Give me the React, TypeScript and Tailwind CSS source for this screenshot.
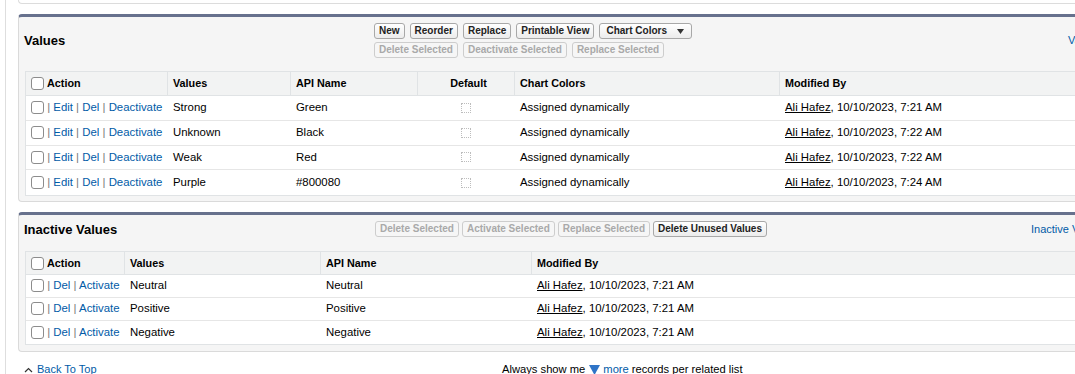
import React from "react";

const LINK = "text-[#015ba7]";

function Box() {
  return <span className="inline-block w-[13px] h-[13px] border border-[#8c8c8c] rounded-[3px] bg-white align-middle shrink-0" />;
}

function Btn({ children, disabled }: { children: React.ReactNode; disabled?: boolean }) {
  return (
    <span
      className={`inline-flex items-center h-[16px] px-[4px] border rounded-[3px] text-[10px] font-bold leading-none whitespace-nowrap ${
        disabled
          ? "border-[#cdcdcd] text-[#a9a9a9] bg-[#f6f6f6]"
          : "border-[#a8a8a8] text-[#222] bg-gradient-to-b from-white to-[#ececec]"
      }`}
    >
      {children}
    </span>
  );
}

type Col = { label: string; w: string; center?: boolean };

function HeaderRow({ cols, h }: { cols: Col[]; h: string }) {
  return (
    <div className={`flex ${h} items-center bg-[#f2f3f3] border-b border-[#e0e3e5] text-[10.8px] font-bold text-black`}>
      {cols.map((c, i) => (
        <div
          key={i}
          className={`${c.w} h-full flex items-center shrink-0 ${i === 0 ? "pl-[5px]" : "border-l border-[#e0e3e5] pl-[5px]"} ${
            c.center ? "justify-center pl-0" : ""
          }`}
        >
          {i === 0 ? (
            <span className="flex items-center gap-[3px]">
              <Box />
              {c.label}
            </span>
          ) : (
            c.label
          )}
        </div>
      ))}
    </div>
  );
}

function ModBy({ t }: { t: string }) {
  return (
    <span className="whitespace-nowrap">
      <span className="underline">Ali Hafez</span>, 10/10/2023, {t}
    </span>
  );
}

function Sep() {
  return <span className="text-[#7a7a7a]"> | </span>;
}

const valuesRows = [
  ["Strong", "Green", "7:21 AM"],
  ["Unknown", "Black", "7:22 AM"],
  ["Weak", "Red", "7:22 AM"],
  ["Purple", "#800080", "7:24 AM"],
];

const inactiveRows = [
  ["Neutral", "Neutral"],
  ["Positive", "Positive"],
  ["Negative", "Negative"],
];

export default function App() {
  return (
    <div className="relative w-[1075px] h-[374px] overflow-hidden bg-white font-['Liberation_Sans',Arial,Helvetica,sans-serif] text-[11.4px] text-black">
      <div className="ml-[5px] w-[1300px] h-[374px] border-l border-[#dedede] pl-[12px]">
        {/* previous panel bottom */}
        <div className="h-[4px] border-l border-b border-[#dcdcdc] rounded-bl-[4px] bg-white" />

        {/* Values panel */}
        <div className="mt-[10px] border-t-[3px] border-t-[#67718d] border-l border-b border-[#dadada] rounded-t-[4px] rounded-bl-[4px] bg-[#f5f5f5]">
          <div className="flex items-center pt-[6px] pb-[13px]">
            <div className="w-[355px] pl-[5px] text-[13px] leading-none font-bold shrink-0">Values</div>
            <div className="w-[694px] shrink-0 flex flex-col gap-[3px]">
              <div className="flex gap-[5px]">
                <Btn>New</Btn>
                <Btn>Reorder</Btn>
                <Btn>Replace</Btn>
                <Btn>Printable View</Btn>
                <span className="inline-flex items-center h-[16px] pl-[6px] pr-[7px] border rounded-[3px] text-[10px] font-bold leading-none whitespace-nowrap border-[#a8a8a8] text-[#222] bg-gradient-to-b from-white to-[#ececec]">
                  Chart Colors
                  <svg width="7" height="5" viewBox="0 0 7 5" className="ml-[10px]">
                    <polygon points="0,0 7,0 3.5,5" fill="#333" />
                  </svg>
                </span>
              </div>
              <div className="flex gap-[5px]">
                <Btn disabled>Delete Selected</Btn>
                <Btn disabled>Deactivate Selected</Btn>
                <Btn disabled>Replace Selected</Btn>
              </div>
            </div>
            <a className={`${LINK} text-[11px] leading-none whitespace-nowrap`}>Values Help</a>
          </div>

          <div className="ml-[6px] mb-[5px] border border-[#e0e3e5] bg-white">
            <HeaderRow
              h="h-[24px]"
              cols={[
                { label: "Action", w: "w-[141px]" },
                { label: "Values", w: "w-[123px]" },
                { label: "API Name", w: "w-[127px]" },
                { label: "Default", w: "w-[97px]", center: true },
                { label: "Chart Colors", w: "w-[265px]" },
                { label: "Modified By", w: "w-[400px]" },
              ]}
            />
            {valuesRows.map((r, i) => (
              <div
                key={i}
                className={`flex h-[24.75px] items-center ${i < valuesRows.length - 1 ? "border-b border-[#e6e6e6]" : ""}`}
              >
                <div className="w-[141px] pl-[5px] shrink-0 flex items-center whitespace-nowrap">
                  <Box />
                  <span className="whitespace-pre">
                    <Sep />
                    <a className={LINK}>Edit</a>
                    <Sep />
                    <a className={LINK}>Del</a>
                    <Sep />
                    <a className={LINK}>Deactivate</a>
                  </span>
                </div>
                <div className="w-[123px] pl-[6px] shrink-0">{r[0]}</div>
                <div className="w-[127px] pl-[6px] shrink-0">{r[1]}</div>
                <div className="w-[97px] shrink-0 flex justify-center">
                  <span className="inline-block w-[10px] h-[10px] border border-dotted border-[#bdbdbd]" />
                </div>
                <div className="w-[265px] pl-[6px] shrink-0">Assigned dynamically</div>
                <div className="w-[400px] pl-[6px] shrink-0">
                  <ModBy t={r[2]} />
                </div>
              </div>
            ))}
          </div>
        </div>

        {/* Inactive Values panel */}
        <div className="mt-[10px] border-t-[3px] border-t-[#67718d] border-l border-b border-[#dadada] rounded-t-[4px] rounded-bl-[4px] bg-[#f5f5f5]">
          <div className="flex items-center pt-[6px] pb-[14px]">
            <div className="w-[356px] pl-[5px] text-[13px] leading-none font-bold shrink-0">Inactive Values</div>
            <div className="w-[656px] shrink-0 flex gap-[3px]">
              <Btn disabled>Delete Selected</Btn>
              <Btn disabled>Activate Selected</Btn>
              <Btn disabled>Replace Selected</Btn>
              <Btn>Delete Unused Values</Btn>
            </div>
            <a className={`${LINK} text-[11px] leading-none whitespace-nowrap`}>Inactive Values Help</a>
          </div>

          <div className="ml-[6px] mb-[6px] border border-[#e0e3e5] bg-white">
            <HeaderRow
              h="h-[23px]"
              cols={[
                { label: "Action", w: "w-[98px]" },
                { label: "Values", w: "w-[196px]" },
                { label: "API Name", w: "w-[211px]" },
                { label: "Modified By", w: "w-[500px]" },
              ]}
            />
            {inactiveRows.map((r, i) => (
              <div
                key={i}
                className={`flex h-[23px] items-center ${i < inactiveRows.length - 1 ? "border-b border-[#e6e6e6]" : ""}`}
              >
                <div className="w-[98px] pl-[5px] shrink-0 flex items-center whitespace-nowrap">
                  <Box />
                  <span className="whitespace-pre">
                    <Sep />
                    <a className={LINK}>Del</a>
                    <Sep />
                    <a className={LINK}>Activate</a>
                  </span>
                </div>
                <div className="w-[196px] pl-[6px] shrink-0">{r[0]}</div>
                <div className="w-[211px] pl-[6px] shrink-0">{r[1]}</div>
                <div className="w-[500px] pl-[6px] shrink-0">
                  <ModBy t="7:21 AM" />
                </div>
              </div>
            ))}
          </div>
        </div>

        {/* footer */}
        <div className="flex items-center mt-[11px] text-[11px] leading-[13px]">
          <div className="flex items-center pl-[6px] w-[484px] shrink-0">
            <svg width="9" height="6" viewBox="0 0 9 6" className="mr-[4px]">
              <polyline points="1,5 4.5,1.5 8,5" fill="none" stroke="#333" strokeWidth="1.2" />
            </svg>
            <a className={LINK}>Back To Top</a>
          </div>
          <div className="flex items-center whitespace-nowrap text-[11.2px]">
            Always show me
            <svg width="11" height="10" viewBox="0 0 11 10" className="ml-[4px] mr-[3px]">
              <polygon points="0,0 11,0 5.5,10" fill="#2f74c7" />
            </svg>
            <a className={LINK}>more</a>
            <span className="ml-[3px]">records per related list</span>
          </div>
        </div>
      </div>
    </div>
  );
}
